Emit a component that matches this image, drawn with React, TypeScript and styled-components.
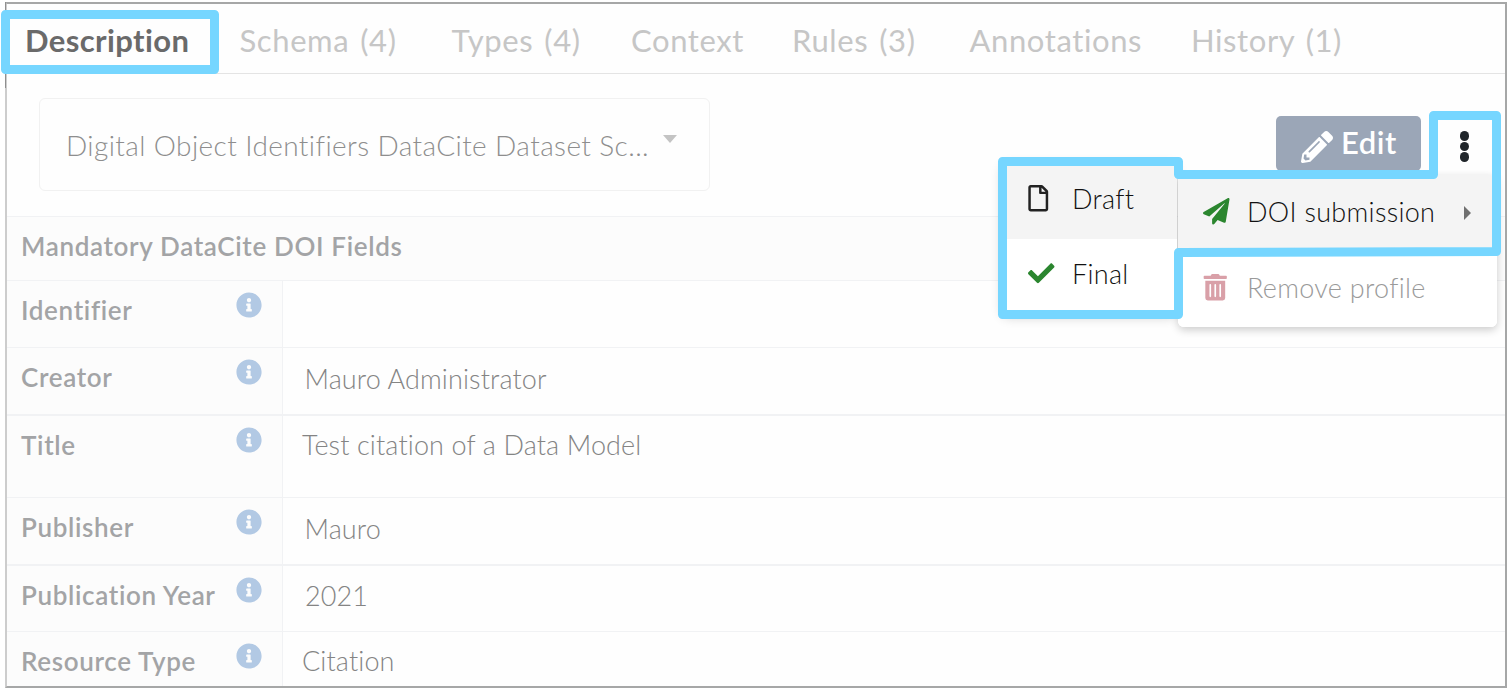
import React from 'react';
import styled, { createGlobalStyle } from 'styled-components';
import { FaCheck, FaInfoCircle, FaPaperPlane, FaPencilAlt, FaRegFile, FaTrashAlt } from 'react-icons/fa';

const GlobalStyle = createGlobalStyle`
  *, *::before, *::after { box-sizing: border-box; }
  body { margin: 0; background: #fff; font-family: Lato, 'Liberation Sans', sans-serif; overflow: hidden; }
`;

const Page = styled.main`
  position: relative;
  width: 1508px;
  height: 689px;
  padding: 2px 1px 1px 5px;
`;

const Frame = styled.section`
  position: relative;
  height: 686px;
  border: 2px solid #a6a7a7;
  border-left-color: #cdcdcd;
  background: #fefefe;
  overflow: hidden;
`;

const FrameAccent = styled.span`
  position: absolute;
  left: 5px;
  top: 2px;
  width: 1px;
  height: 86px;
  background: #8f8f8f;
`;

const TabBar = styled.nav`
  display: flex;
  height: 70px;
  padding: 18px 0 0 18px;
  border-bottom: 1px solid #e4e4e4;
`;

const Tab = styled.a<{ $width: number; $active?: boolean }>`
  flex: none;
  width: ${(p) => p.$width}px;
  font-size: 31px;
  line-height: 36px;
  font-weight: ${(p) => (p.$active ? 700 : 400)};
  letter-spacing: ${(p) => (p.$active ? 0.4 : 0.6)}px;
  word-spacing: ${(p) => (p.$active ? 0 : 2.5)}px;
  white-space: nowrap;
  color: ${(p) => (p.$active ? '#6a6a6a' : '#c6c6c6')};
`;

const Toolbar = styled.header`
  display: flex;
  align-items: flex-start;
  height: 142px;
  padding: 24px 7px 0 32px;
`;

const Select = styled.div`
  display: flex;
  width: 671px;
  height: 93px;
  padding: 29px 32px 0 26px;
  justify-content: space-between;
  border: 1px solid #f1f1f1;
  border-radius: 6px;
  font-size: 28px;
  font-weight: 300;
  line-height: 34px;
  letter-spacing: 0.4px;
  white-space: nowrap;
  color: #8e8e8e;
`;

const CaretDown = styled.span`
  margin-top: 7px;
  width: 0;
  height: 0;
  border: 7.5px solid transparent;
  border-top: 8px solid #c4c4c4;
  border-bottom: 0;
`;

const EditButton = styled.button`
  display: flex;
  align-items: flex-start;
  gap: 8px;
  width: 145px;
  height: 55px;
  margin: 18px 0 0 auto;
  padding: 8px 0 0 25px;
  border: 0;
  border-radius: 5px;
  background: #9ba6b7;
  color: #fff;
  font: 600 31px/36px Lato, 'Liberation Sans', sans-serif;
  letter-spacing: 0.5px;
  svg { width: 32px; height: 32px; margin-top: 7px; }
`;

const Kebab = styled.button`
  display: flex;
  flex-direction: column;
  align-items: center;
  gap: 1px;
  width: 67px;
  margin-top: 33px;
  margin-left: 10px;
  padding: 0;
  border: 0;
  background: none;
`;

const Dot = styled.i`
  width: 9.6px;
  height: 9.6px;
  border-radius: 50%;
  background: #20252a;
`;

const Row = styled.div<{ $height: number; $thick?: boolean }>`
  display: flex;
  height: ${(p) => p.$height}px;
  border-top: ${(p) => (p.$thick ? 2 : 1)}px solid #f1f2f4;
`;

const labelFont = `
  font-size: 26px;
  line-height: 32px;
  font-weight: 600;
  letter-spacing: 0.66px;
  white-space: nowrap;
  color: #a3a4a6;
`;

const GroupHeading = styled.h2`
  flex: 1;
  margin: 0;
  padding: 13px 0 0 14px;
  background: #fcfcfc;
  ${labelFont}
`;

const Label = styled.div`
  display: flex;
  justify-content: space-between;
  width: 276px;
  padding: 13px 20px 0 14px;
  border-right: 1px solid #f1f2f4;
  background: #fcfcfc;
  ${labelFont}
  svg { width: 26px; height: 26px; margin-top: -2px; color: #b2c9e4; }
`;

const Value = styled.div<{ $top: number; $indent: number }>`
  padding: ${(p) => p.$top}px 0 0 ${(p) => p.$indent}px;
  font-size: 27px;
  line-height: 32px;
  font-weight: 300;
  letter-spacing: 0.12px;
  color: #848484;
`;

const Menu = styled.div`
  position: absolute;
  left: 1178px;
  top: 175px;
  width: 319px;
  height: 152px;
  border-radius: 6px;
  background: #fff;
  overflow: hidden;
`;

const MenuShadow = styled(Menu)`
  overflow: visible;
  box-shadow: 0 3px 8px rgba(0, 0, 0, 0.2);
`;

const SubMenu = styled.div`
  position: absolute;
  left: 1002px;
  top: 162px;
  width: 175px;
  height: 152px;
  padding-top: 2px;
  background: #fff;
  border-radius: 6px;
  box-shadow: 0 3px 12px rgba(0, 0, 0, 0.2);
`;

const Item = styled.div<{ $active?: boolean; $muted?: boolean; $sub?: boolean; $tint: string }>`
  display: flex;
  align-items: center;
  height: ${(p) => (p.$sub ? 75 : 76)}px;
  padding: 0 0 ${(p) => (p.$sub ? 6 : 3)}px ${(p) => (p.$sub ? 26 : 25)}px;
  background: ${(p) => (p.$active ? '#f4f4f4' : '#fff')};
  font-size: 27px;
  line-height: 32px;
  font-weight: 300;
  letter-spacing: 0.3px;
  white-space: nowrap;
  color: ${(p) => (p.$muted ? '#9a9a9a' : '#111')};
  svg { height: 26.5px; width: auto; color: ${(p) => p.$tint}; }
`;

const IconSlot = styled.span<{ $shift?: number }>`
  display: flex;
  flex: none;
  width: ${(p) => 44 + (p.$shift ?? 0)}px;
  margin-left: ${(p) => -(p.$shift ?? 0)}px;
`;

const ArrowRight = styled.span`
  margin: 2px 26px 0 auto;
  width: 0;
  height: 0;
  border: 7px solid transparent;
  border-left: 7.5px solid #707070;
  border-right: 0;
`;

const Callouts = styled.svg`
  position: absolute;
  left: 0;
  top: 0;
  pointer-events: none;
`;

const tabs = [
  { name: 'Description', width: 214.5 },
  { name: 'Schema (4)', width: 212 },
  { name: 'Types (4)', width: 179.5 },
  { name: 'Context', width: 161 },
  { name: 'Rules (3)', width: 177.5 },
  { name: 'Annotations', width: 221.5 },
  { name: 'History (1)', width: 160 },
];

const fields = [
  { label: 'Identifier', value: '', height: 67, valueTop: 13, indent: 22 },
  { label: 'Creator', value: 'Mauro Administrator', height: 67, valueTop: 15, indent: 21.5 },
  { label: 'Title', value: 'Test citation of a Data Model', height: 83, valueTop: 13, indent: 19, thick: true },
  { label: 'Publisher', value: 'Mauro', height: 67, valueTop: 15, indent: 21.5 },
  { label: 'Publication Year', value: '2021', height: 67, valueTop: 14, indent: 22, thick: true },
  { label: 'Resource Type', value: 'Citation', height: 57, valueTop: 13, indent: 19 },
];

export default function App() {
  return (
    <Page>
      <GlobalStyle />
      <Frame>
        <TabBar>
          {tabs.map((tab, i) => (
            <Tab key={tab.name} $width={tab.width} $active={i === 0}>{tab.name}</Tab>
          ))}
        </TabBar>
        <Toolbar>
          <Select>
            Digital Object Identifiers DataCite Dataset Sc...
            <CaretDown />
          </Select>
          <EditButton><FaPencilAlt />Edit</EditButton>
          <Kebab aria-label="More actions"><Dot /><Dot /><Dot /></Kebab>
        </Toolbar>
        <Row $height={64}><GroupHeading>Mandatory DataCite DOI Fields</GroupHeading></Row>
        {fields.map((f) => (
          <Row key={f.label} $height={f.height} $thick={f.thick}>
            <Label>{f.label}<FaInfoCircle /></Label>
            <Value $top={f.valueTop} $indent={f.indent}>{f.value}</Value>
          </Row>
        ))}
      </Frame>
      <FrameAccent />
      <MenuShadow />
      <SubMenu>
        <Item $active $sub $tint="#222"><IconSlot $shift={3}><FaRegFile /></IconSlot>Draft</Item>
        <Item $sub $tint="#2b862f"><IconSlot><FaCheck /></IconSlot>Final</Item>
      </SubMenu>
      <Menu>
        <Item $active $tint="#2b862f"><IconSlot><FaPaperPlane /></IconSlot>DOI submission<ArrowRight /></Item>
        <Item $muted $tint="#d9a0a8"><IconSlot $shift={1.5}><FaTrashAlt /></IconSlot>Remove profile</Item>
      </Menu>
      <Callouts width="1508" height="689" fill="none" stroke="#76d6ff" strokeWidth="9" strokeLinejoin="round">
        <path d="M5.5 14.5H214.5V69.5H5.5Z" />
        <path d="M1002.5 161.5H1178.5V174.5H1433.5V115.5H1496.5V251.5L1178.5 252.5V314.5H1002.5Z" />
      </Callouts>
    </Page>
  );
}
